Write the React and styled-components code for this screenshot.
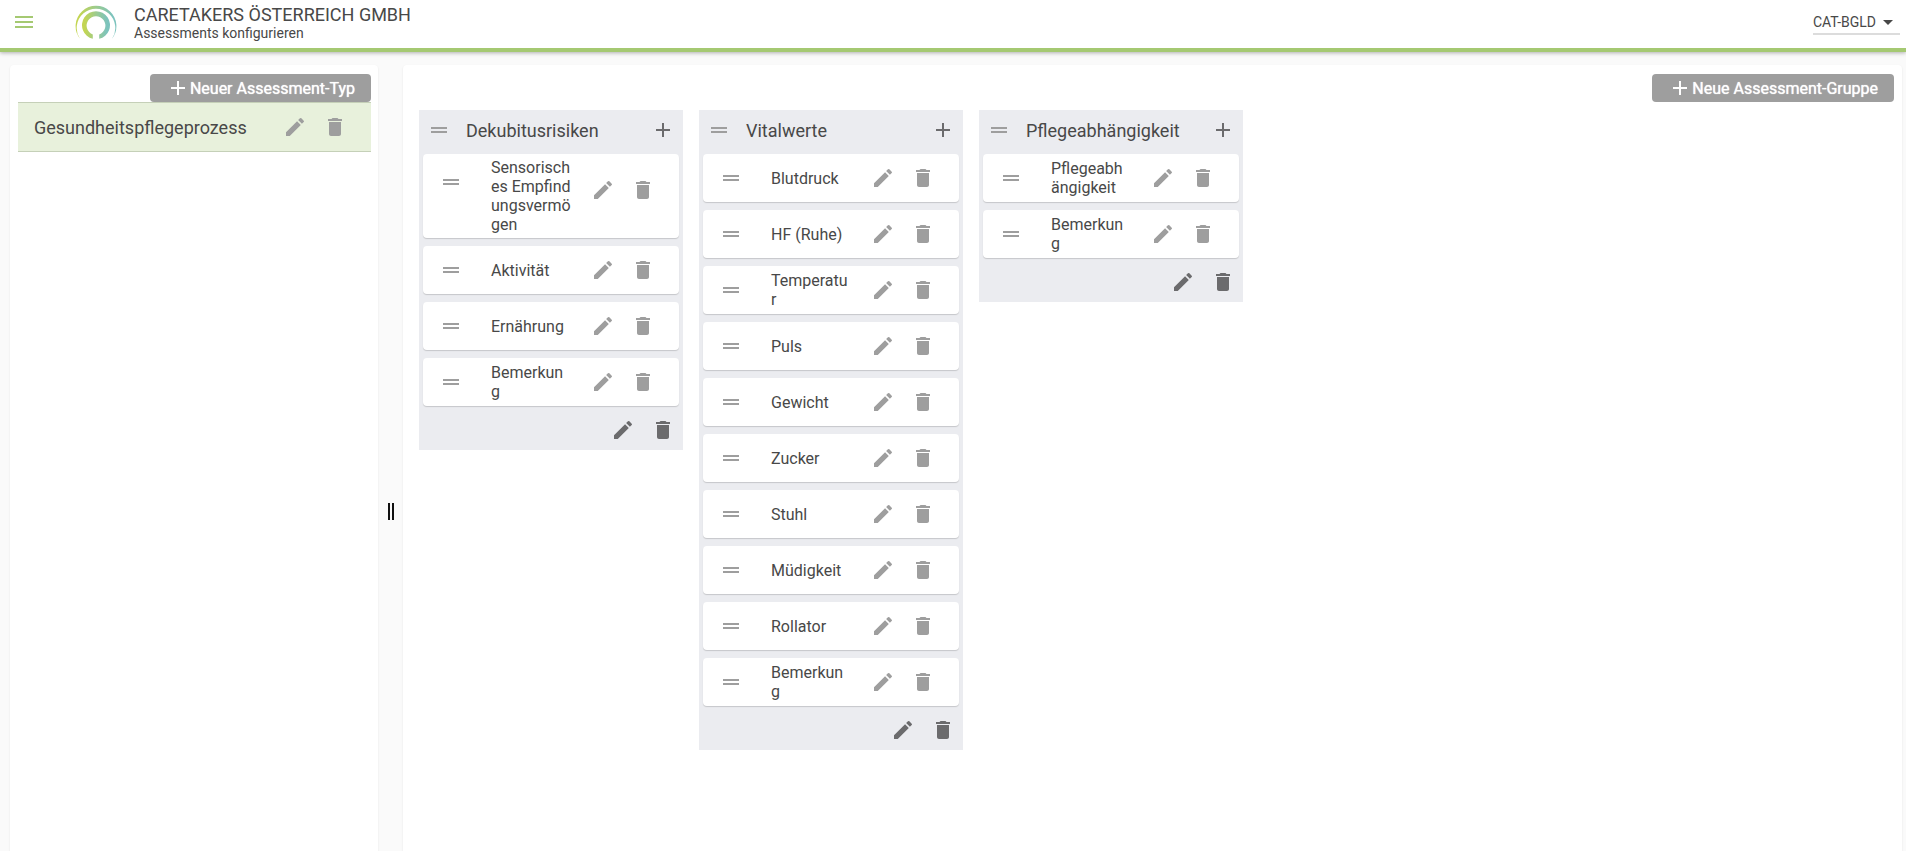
import React from 'react'
import styled, { createGlobalStyle } from 'styled-components'
import { MdAdd, MdArrowDropDown, MdDelete, MdDragHandle, MdEdit, MdMenu } from 'react-icons/md'

const groups = [
    {
        name: 'Dekubitusrisiken',
        items: ['Sensorisches Empfindungsvermögen', 'Aktivität', 'Ernährung', 'Bemerkung'],
    },
    {
        name: 'Vitalwerte',
        items: ['Blutdruck', 'HF (Ruhe)', 'Temperatur', 'Puls', 'Gewicht', 'Zucker', 'Stuhl', 'Müdigkeit', 'Rollator', 'Bemerkung'],
    },
    {
        name: 'Pflegeabhängigkeit',
        items: ['Pflegeabhängigkeit', 'Bemerkung'],
    },
]

const Logo = () => (
    <LogoSvg viewBox="0 0 42 36" aria-hidden="true">
        <defs>
            <linearGradient id="ring" x1="0" x2="1" y1="0" y2="0">
                <stop offset="0.1" stopColor="#c3d552" />
                <stop offset="0.5" stopColor="#9ccb8e" />
                <stop offset="0.9" stopColor="#7cc3bd" />
            </linearGradient>
        </defs>
        <path d="M5 34.8A20.4 20.4 0 1 1 37 34.8A19.3 19.3 0 1 0 5 34.8Z" fill="url(#ring)" />
        <path d="M17.8 34.8A14 14 0 1 1 24.2 34.8V30.4A9.4 9.4 0 1 0 17.8 30.4Z" fill="url(#ring)" />
    </LogoSvg>
)

const EditButtons = ({ name }) => (
    <>
        <IconButton type="button" aria-label={`${name} bearbeiten`}><MdEdit /></IconButton>
        <IconButton type="button" aria-label={`${name} löschen`}><MdDelete /></IconButton>
    </>
)

const ItemCard = ({ name }) => (
    <Card>
        <CardHandle><MdDragHandle /></CardHandle>
        <CardText>{name}</CardText>
        <CardActions>
            <EditButtons name={name} />
        </CardActions>
    </Card>
)

const Group = ({ group }) => (
    <Column>
        <ColumnHeader>
            <MdDragHandle />
            <h2>{group.name}</h2>
            <AddItem type="button" aria-label={`${group.name}: hinzufügen`}><MdAdd /></AddItem>
        </ColumnHeader>
        <CardList>
            {group.items.map((item) => <ItemCard key={item} name={item} />)}
        </CardList>
        <ColumnFooter>
            <EditButtons name={group.name} />
        </ColumnFooter>
    </Column>
)

const App = () => {
    return (
        <Page>
            <GlobalStyle />
            <Header>
                <MenuButton type="button" aria-label="Menü"><MdMenu /></MenuButton>
                <Logo />
                <Titles>
                    <h1>CARETAKERS ÖSTERREICH GMBH</h1>
                    <p>Assessments konfigurieren</p>
                </Titles>
                <SelectWrap>
                    <select aria-label="Standort" defaultValue="CAT-BGLD">
                        <option>CAT-BGLD</option>
                    </select>
                    <MdArrowDropDown />
                </SelectWrap>
            </Header>
            <Workspace>
                <TypePanel>
                    <ActionButton type="button"><MdAdd />Neuer Assessment-Typ</ActionButton>
                    <TypeRow>
                        <TypeLink href="#gesundheitspflegeprozess">Gesundheitspflegeprozess</TypeLink>
                        <EditButtons name="Gesundheitspflegeprozess" />
                    </TypeRow>
                </TypePanel>
                <Splitter><span /><span /></Splitter>
                <GroupPanel>
                    <ActionButton type="button"><MdAdd />Neue Assessment-Gruppe</ActionButton>
                    <Board>
                        {groups.map((group) => <Group key={group.name} group={group} />)}
                    </Board>
                </GroupPanel>
            </Workspace>
        </Page>
    )
}

export default App

const GlobalStyle = createGlobalStyle`
*{
    box-sizing:border-box;
}
body{
    margin:0;
    background:#fafafa;
    color:#484848;
    font-family:Roboto, sans-serif;
    font-size:16px;
}
h1, h2, p{
    margin:0;
    font-weight:400;
}
button{
    border:0;
    padding:0;
    background:none;
    font-family:inherit;
    cursor:pointer;
}
`

const Page = styled.div`
height:100vh;
overflow:hidden;`

const Header = styled.header`
position:relative;
display:flex;
align-items:flex-start;
height:52px;
padding:0 6px 0 12px;
background:#fff;
border-bottom:4px solid #a5c972;
box-shadow:0 1px 4px rgba(0,0,0,.3);`

const MenuButton = styled.button`
display:flex;
margin-top:10px;
font-size:24px;
color:#a5c972;`

const LogoSvg = styled.svg`
width:42px;
height:36px;
margin:4px 17px 0 39px;`

const Titles = styled.div`
flex:1;
padding-top:4px;
h1{
    font-size:18px;
    line-height:21px;
}
p{
    font-size:14px;
    line-height:16px;
}
`

const SelectWrap = styled.div`
position:relative;
margin-top:10px;
width:87px;
height:25px;
border-bottom:2px solid #dcdcdc;
select{
    appearance:none;
    width:100%;
    height:24px;
    padding:0;
    border:0;
    background:none;
    color:inherit;
    font-family:inherit;
    font-size:14px;
}
svg{
    position:absolute;
    right:0;
    top:0;
    font-size:24px;
    pointer-events:none;
}
`

const Workspace = styled.main`
display:flex;
height:105vh;
margin:13px 4px 0 10px;`

const Panel = styled.section`
display:flex;
flex-direction:column;
padding:9px 8px;
background:#fff;
border-radius:4px;
box-shadow:0 1px 2px rgba(0,0,0,.1);`

const TypePanel = styled(Panel)`
width:368px;
padding-right:7px;
flex-shrink:0;`

const GroupPanel = styled(Panel)`
flex:1;
min-width:0;`

const ActionButton = styled.button`
display:flex;
align-items:center;
align-self:flex-end;
height:28px;
padding:0 16px;
border-radius:4px;
background:#9e9e9e;
color:#fff;
font-size:16px;
text-shadow:0 0 1px #fff;
svg{
    font-size:24px;
}
`

const TypeRow = styled.div`
display:flex;
align-items:center;
height:50px;
padding:0 16px;
background:#e8f1dc;
border-top:1px solid #c5d0b8;
border-bottom:1px solid #c5d0b8;`

const TypeLink = styled.a`
flex:1;
color:inherit;
font-size:18px;
text-decoration:none;`

const IconButton = styled.button`
display:flex;
align-items:center;
justify-content:center;
width:40px;
height:40px;
font-size:24px;
color:#9e9e9e;`

const Splitter = styled.div`
display:flex;
align-items:center;
justify-content:center;
gap:2px;
width:25px;
cursor:col-resize;
span{
    width:2px;
    height:17px;
    background:#111;
}
`

const Board = styled.div`
display:flex;
align-items:flex-start;
gap:16px;
padding:8px;`

const Column = styled.section`
width:264px;
flex-shrink:0;
background:#ebecf0;`

const ColumnHeader = styled.div`
display:flex;
align-items:center;
height:44px;
padding:0 8px 4px;
> svg{
    font-size:24px;
    color:#9e9e9e;
}
h2{
    flex:1;
    padding-left:15px;
    font-size:18px;
    line-height:21px;
}
`

const AddItem = styled.button`
display:flex;
font-size:24px;
color:#6b6b6d;`

const CardList = styled.div`
display:flex;
flex-direction:column;
gap:8px;
padding:0 4px;`

const Card = styled.div`
display:flex;
align-items:center;
min-height:48px;
padding:0 16px;
background:#fff;
border-radius:4px;
box-shadow:0 1px 1px rgba(0,0,0,.16);`

const CardHandle = styled.span`
display:flex;
align-items:center;
align-self:stretch;
width:52px;
max-height:56px;
font-size:24px;
color:#9e9e9e;`

const CardText = styled.span`
width:80px;
padding:4px 0;
line-height:19px;
word-break:break-all;`

const CardActions = styled.div`
display:flex;
align-items:center;
align-self:stretch;
max-height:72px;
margin-left:auto;`

const ColumnFooter = styled.div`
display:flex;
align-items:center;
justify-content:flex-end;
height:44px;
padding-top:4px;
${IconButton}{
    color:#6b6b6d;
}
`
